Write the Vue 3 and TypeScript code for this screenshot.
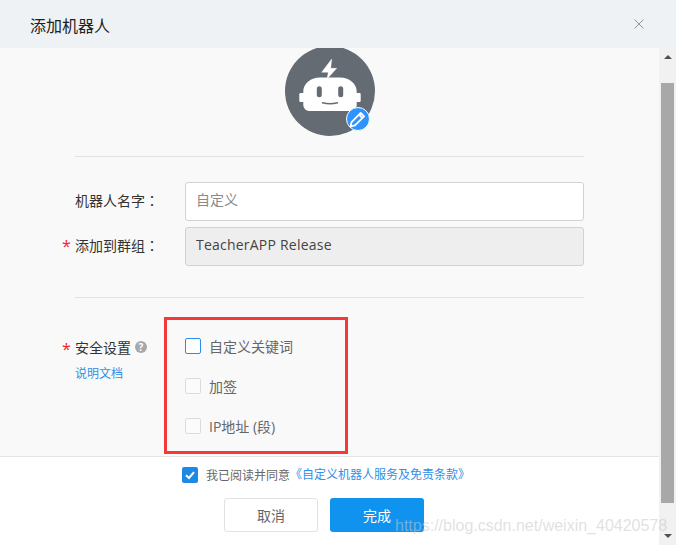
<script setup lang="ts">
const options: { text: string; active: boolean }[] = [
  { text: '自定义关键词', active: true },
  { text: '加签', active: false },
  { text: 'IP地址 (段)', active: false },
]
</script>

<template>
  <div class="shell">
    <div class="main">
      <header class="head">
        <span class="title">添加机器人</span>
        <svg class="close" width="10" height="10" viewBox="0 0 10 10"><path d="M0.5 0.5L9.5 9.5M9.5 0.5L0.5 9.5" stroke="#8d9299" stroke-width="1" fill="none" /></svg>
      </header>

      <section class="body">
        <div class="avatar">
          <svg width="90" height="90" viewBox="0 0 90 90">
            <circle cx="45" cy="45" r="45" fill="#646b73" />
            <path d="M24 65H66A5.7 5.7 0 0 0 71.7 59.3V56H74.5A1.2 1.2 0 0 0 75.7 54.8V48.3A1.2 1.2 0 0 0 74.5 47.1H71.7V45.5C71.7 37.5 64 31.5 55 31.5H35C26 31.5 18.3 37.5 18.3 45.5V47.1H15.5A1.2 1.2 0 0 0 14.3 48.3V54.8A1.2 1.2 0 0 0 15.5 56H18.3V59.3A5.7 5.7 0 0 0 24 65Z" fill="#fff" />
            <path d="M46.7 13L36.7 26.3H43.3L42 33L51.7 22.3H45.7Z" fill="#fff" stroke="#fff" stroke-width="0.4" />
            <rect x="31.8" y="40.2" width="5" height="11" rx="2.5" fill="#646b73" />
            <rect x="53.2" y="40.2" width="5" height="11" rx="2.5" fill="#646b73" />
            <path d="M37.5 56.8Q45 58.6 52.5 56.8" stroke="#646b73" stroke-width="1.4" fill="none" stroke-linecap="round" />
          </svg>
          <span class="badge">
            <svg width="17" height="17" viewBox="0 0 16 16"><path d="M11 1.8L14.2 5L5.6 13.6L1.6 14.4L2.4 10.4Z M9.4 3.4L12.6 6.6" stroke="#fff" stroke-width="1.7" fill="none" stroke-linejoin="round" /></svg>
          </span>
        </div>

        <div class="rule first"></div>

        <div class="row">
          <label class="label">机器人名字<span class="colon">：</span></label>
          <div class="input placeholder">自定义</div>
        </div>
        <div class="row second">
          <label class="label"><i class="star">*</i>添加到群组<span class="colon">：</span></label>
          <div class="input disabled">TeacherAPP Release</div>
        </div>

        <div class="rule mid"></div>

        <div class="security">
          <div class="sec-label">
            <div class="sec-title">
              <i class="star">*</i>安全设置
              <span class="help">?</span>
            </div>
            <a class="doc">说明文档</a>
          </div>
          <ul class="opts">
            <li v-for="o in options" :key="o.text" class="opt">
              <span class="box" :class="{ active: o.active }"></span>
              <span>{{ o.text }}</span>
            </li>
          </ul>
        </div>
      </section>

      <footer class="foot">
        <div class="agree">
          <span class="checked">
            <svg width="12" height="12" viewBox="0 0 12 12"><path d="M2 6.2L5 9L10 3.2" stroke="#fff" stroke-width="2" fill="none" /></svg>
          </span>
          <span class="agree-text">我已阅读并同意</span><a class="doc">《自定义机器人服务及免责条款》</a>
        </div>
        <div class="btns">
          <button class="btn cancel">取消</button>
          <button class="btn ok">完成</button>
        </div>
      </footer>
    </div>

    <aside class="scroll">
      <span class="arrow up"></span>
      <span class="thumb"></span>
      <span class="arrow down"></span>
    </aside>

    <div class="redbox"></div>
    <div class="mark">https://blog.csdn.net/weixin_40420578</div>
  </div>
</template>

<style>
html, body { margin: 0; background: #fff; }
</style>

<style scoped>
.shell {
  position: relative;
  display: flex;
  width: 676px;
  height: 545px;
  overflow: hidden;
  background: #fff;
  font-family: "Open Sans", "Noto Sans CJK SC", sans-serif;
  font-size: 14px;
  color: #333;
}
.main { width: 659px; display: flex; flex-direction: column; }
.head {
  flex: none;
  width: 676px;
  height: 48px;
  background: #eff2f5;
  display: flex;
  align-items: center;
  justify-content: space-between;
  padding: 0 32px 0 30px;
  box-sizing: border-box;
  position: relative;
  z-index: 1;
}
.title { font-size: 16px; color: #222; line-height: 20px; margin-top: 4px; }
.body {
  flex: 1;
  min-height: 0;
  background: #f9f9f9;
  padding: 0 75px;
  overflow: hidden;
}
.avatar {
  position: relative;
  width: 90px;
  height: 90px;
  margin: -2px auto 0;
}
.avatar > svg { display: block; }
.badge {
  position: absolute;
  left: 61px;
  top: 61px;
  width: 22px;
  height: 22px;
  border: 1px solid #fff;
  border-radius: 50%;
  background: #2e93ff;
  display: flex;
  align-items: center;
  justify-content: center;
}
.rule { height: 1px; background: #e4e4e4; }
.rule.first { margin: 20px 0 25px; }
.rule.mid { margin: 31px 0 40px; }
.row { display: flex; align-items: center; }
.row.second { margin-top: 6px; }
.label { position: relative; width: 110px; flex: none; color: #333; line-height: 20px; margin-top: -2px; }
.colon { font-family: "Noto Sans CJK TC", sans-serif; }
.star {
  position: absolute;
  left: -13px;
  top: 1px;
  color: #f5222d;
  font-style: normal;
  font-size: 16px;
  line-height: 20px;
}
.input {
  flex: 1;
  height: 39px;
  box-sizing: border-box;
  border: 1px solid #d2d2d2;
  border-radius: 3px;
  padding: 0 10px;
  line-height: 34px;
}
.placeholder { background: #fff; color: #8a8a8a; }
.disabled { background: #eeeeee; color: #444; letter-spacing: 0.22px; }
.security { display: flex; }
.sec-label { width: 110px; flex: none; }
.sec-title {
  position: relative;
  display: flex;
  align-items: center;
  height: 18px;
  color: #333;
}
.help {
  width: 12px;
  height: 12px;
  margin-left: 4px;
  border-radius: 50%;
  background: #a5a8ad;
  color: #fff;
  font-size: 10px;
  font-weight: 700;
  line-height: 12px;
  text-align: center;
}
.doc { color: #2f8fe8; font-size: 12px; line-height: 18px; }
.sec-label .doc { display: block; margin-top: 9px; }
.opts { list-style: none; margin: 0; padding: 0; display: flex; flex-direction: column; gap: 24px; }
.opt { display: flex; align-items: center; gap: 8px; height: 16px; color: #666; font-size: 14px; }
.box {
  width: 16px;
  height: 16px;
  box-sizing: border-box;
  border: 1px solid #dcdcdc;
  border-radius: 2px;
  background: #fbfbfb;
}
.box.active { border-color: #2d8cf0; background: #fff; }
.foot {
  flex: none;
  height: 89px;
  box-sizing: border-box;
  border-top: 1px solid #e5e5e5;
  background: #fff;
  padding-top: 10px;
  display: flex;
  flex-direction: column;
  align-items: center;
}
.agree { display: flex; align-items: center; height: 16px; margin-left: -7px; }
.checked {
  width: 16px;
  height: 16px;
  margin-right: 8px;
  border-radius: 2px;
  background: #1e88e5;
  display: flex;
  align-items: center;
  justify-content: center;
}
.agree-text { font-size: 12px; color: #666; }
.btns { display: flex; gap: 12px; margin: 15px 0 0 -11px; }
.btn {
  width: 94px;
  height: 34px;
  border-radius: 3px;
  font-family: inherit;
  font-size: 14px;
  padding: 0;
  box-sizing: border-box;
}
.cancel { background: #fff; border: 1px solid #e2e2e2; color: #666; }
.ok { background: #0f93ee; border: 0; color: #fff; }
.scroll {
  width: 17px;
  margin-top: 48px;
  background: #f1f1f1;
  display: flex;
  flex-direction: column;
  align-items: center;
}
.arrow { width: 0; height: 0; border-left: 4px solid transparent; border-right: 4px solid transparent; }
.arrow.up { border-bottom: 4px solid #505050; margin-top: 7px; }
.arrow.down { border-top: 4px solid #505050; margin-top: 31px; }
.thumb { width: 13px; height: 420px; margin-top: 24px; background: #a8a8a8; flex: none; }
.redbox {
  position: absolute;
  left: 164px;
  top: 317px;
  width: 184px;
  height: 137px;
  box-sizing: border-box;
  border: 3px solid #f33a3a;
}
.mark {
  position: absolute;
  left: 395px;
  top: 516px;
  font-family: "Liberation Sans", sans-serif;
  font-size: 16px;
  line-height: 20px;
  color: rgba(200, 200, 200, 0.55);
  white-space: nowrap;
}
</style>
